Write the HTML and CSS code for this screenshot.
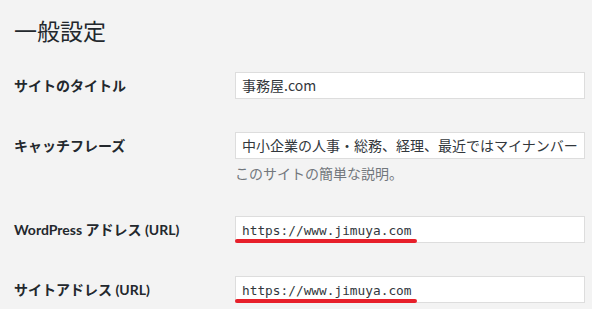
FILE: index.html
```html
<!DOCTYPE html>
<html lang="ja">
<head>
  <meta charset="UTF-8" />
  <title>一般設定</title>
  <link rel="stylesheet" href="styles.css">
</head>
<body>
  <div class="wrap">
    <h1>一般設定</h1>
    <div class="form">
      <div class="row">
        <div class="label">サイトのタイトル</div>
        <div class="cell">
          <div class="field">事務屋.com</div>
        </div>
      </div>
      <div class="row">
        <div class="label">キャッチフレーズ</div>
        <div class="cell">
          <div class="field">中小企業の人事・総務、経理、最近ではマイナンバー</div>
          <p class="desc">このサイトの簡単な説明。</p>
        </div>
      </div>
      <div class="row">
        <div class="label">WordPress アドレス (URL)</div>
        <div class="cell">
          <div class="field code">https://www.jimuya.com<span class="mark"></span></div>
        </div>
      </div>
      <div class="row">
        <div class="label">サイトアドレス (URL)</div>
        <div class="cell">
          <div class="field code">https://www.jimuya.com<span class="mark"></span></div>
        </div>
      </div>
    </div>
  </div>
</body>
</html>
```

FILE: styles.css
```css
body { margin: 0; background: #f3f3f3; color: #23282d; font-family: "Lato", "Noto Sans CJK JP", sans-serif; overflow: hidden; }
.wrap { padding: 15px 0 0 14px; }
h1 { margin: 0; font-family: "Noto Sans CJK JP", sans-serif; font-weight: 400; font-size: 23px; line-height: 30px; color: #23282d; }
.form { display: flex; flex-direction: column; gap: 33px; margin-top: 27px; }
.row { display: flex; align-items: flex-start; }
.label { width: 221px; flex: none; font-size: 14px; font-weight: 700; line-height: 27px; }
.cell { flex: none; width: 350px; }
.field { position: relative; box-sizing: border-box; height: 27px; padding: 0 6px; background: #fff; border: 1px solid #ddd; font-size: 14px; line-height: 25px; color: #32373c; white-space: nowrap; overflow: hidden; font-family: "Noto Sans CJK JP", sans-serif; }
.field.code { font-family: "DejaVu Sans Mono", monospace; font-size: 12.8px; line-height: 27px; overflow: visible; }
.mark { position: absolute; left: -1px; bottom: -1px; width: 182px; height: 4px; border-radius: 2px; background: #e71f2a; }
.desc { margin: 4px 0 0; font-size: 14px; line-height: 20px; color: #72777c; font-family: "Noto Sans CJK JP", sans-serif; }
```
